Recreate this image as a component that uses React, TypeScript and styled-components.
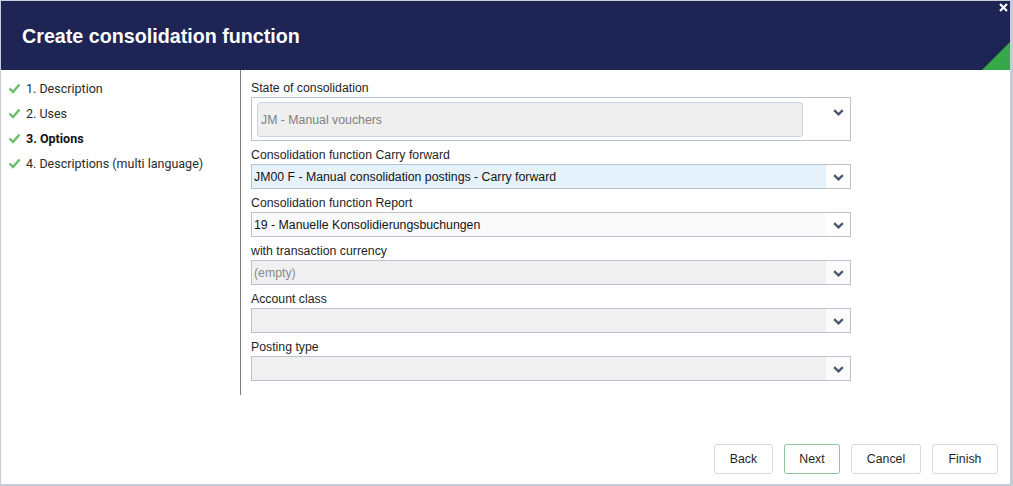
import React from 'react';
import styled, {createGlobalStyle} from 'styled-components';

const GlobalStyle = createGlobalStyle`
    html, body {
        margin: 0;
        padding: 0;
        background: #ffffff;
    }

    * {
        box-sizing: border-box;
    }
`;

interface Step {
    label: string;
    current?: boolean;
}

const steps: Step[] = [
    {label: '1. Description'},
    {label: '2. Uses'},
    {label: '3. Options', current: true},
    {label: '4. Descriptions (multi language)'},
];

type FieldTone = 'focus' | 'plain' | 'disabled';

interface Field {
    label: string;
    value?: string;
    tone: FieldTone;
    muted?: boolean;
}

const fields: Field[] = [
    {label: 'Consolidation function Carry forward', value: 'JM00 F - Manual consolidation postings - Carry forward', tone: 'focus'},
    {label: 'Consolidation function Report', value: '19 - Manuelle Konsolidierungsbuchungen', tone: 'plain'},
    {label: 'with transaction currency', value: '(empty)', tone: 'disabled', muted: true},
    {label: 'Account class', tone: 'disabled'},
    {label: 'Posting type', tone: 'disabled'},
];

const toneBg: Record<FieldTone, string> = {
    focus: '#e6f2fb',
    plain: '#fafafa',
    disabled: '#f0f0f0',
};

const buttons = [
    {label: 'Back', width: 59},
    {label: 'Next', width: 56, primary: true},
    {label: 'Cancel', width: 70},
    {label: 'Finish', width: 66},
];

const CheckIcon = () => (
    <svg
        width='13'
        height='11'
        viewBox='0 0 13 11'
    >
        <path
            d='M1.5 5.5 L5 9 L11.5 1.5'
            fill='none'
            stroke='#6cbd6a'
            strokeWidth='2.4'
        />
    </svg>
);

const ChevronIcon = () => (
    <svg
        width='11'
        height='7'
        viewBox='0 0 11 7'
    >
        <path
            d='M1.2 1.2 L5.5 5.3 L9.8 1.2'
            fill='none'
            stroke='#4b5568'
            strokeWidth='2.3'
        />
    </svg>
);

const CloseIcon = () => (
    <svg
        width='9'
        height='9'
        viewBox='0 0 9 9'
    >
        <path
            d='M1 1 L8 8 M8 1 L1 8'
            fill='none'
            stroke='#ffffff'
            strokeWidth='2.2'
        />
    </svg>
);

const App = () => {
    return (
        <>
            <GlobalStyle/>
            <Window>
                <Header>
                    <Title>{'Create consolidation function'}</Title>
                    <CloseButton>
                        <CloseIcon/>
                    </CloseButton>
                    <Corner/>
                </Header>
                <Body>
                    <Sidebar>
                        {steps.map((step) => (
                            <StepRow
                                key={step.label}
                                $current={step.current}
                            >
                                <CheckIcon/>
                                <span>{step.label}</span>
                            </StepRow>
                        ))}
                    </Sidebar>
                    <Form>
                        <FieldLabel>{'State of consolidation'}</FieldLabel>
                        <StateBox>
                            <StateInput>{'JM - Manual vouchers'}</StateInput>
                            <StateArrow>
                                <ChevronIcon/>
                            </StateArrow>
                        </StateBox>
                        {fields.map((field) => (
                            <React.Fragment key={field.label}>
                                <FieldLabel>{field.label}</FieldLabel>
                                <SelectBox>
                                    <SelectValue
                                        $bg={toneBg[field.tone]}
                                        $muted={field.muted}
                                    >
                                        {field.value}
                                    </SelectValue>
                                    <SelectArrow $disabled={field.tone === 'disabled'}>
                                        <ChevronIcon/>
                                    </SelectArrow>
                                </SelectBox>
                            </React.Fragment>
                        ))}
                    </Form>
                </Body>
                <Footer>
                    {buttons.map((b) => (
                        <Button
                            key={b.label}
                            $primary={b.primary}
                            $width={b.width}
                        >
                            {b.label}
                        </Button>
                    ))}
                </Footer>
            </Window>
        </>
    );
};

const Window = styled.div`
    width: 1013px;
    height: 486px;
    display: flex;
    flex-direction: column;
    border: 1px solid #c6cdd8;
    border-right: 3px solid #c6cdd8;
    border-bottom: 2px solid #c6cdd8;
    background: #ffffff;
    font-family: "Liberation Sans", Arial, sans-serif;
    color: #1f1f1f;
`;

const Header = styled.div`
    position: relative;
    height: 69px;
    flex: none;
    display: flex;
    align-items: center;
    padding-left: 21px;
    background: #1e2454;
    overflow: hidden;
`;

const Title = styled.h1`
    margin: 0;
    padding-top: 1px;
    font-size: 19.7px;
    font-weight: 700;
    color: #ffffff;
`;

const CloseButton = styled.span`
    position: absolute;
    top: 2px;
    right: 2px;
    display: flex;
`;

const Corner = styled.div`
    position: absolute;
    right: 0;
    bottom: 0;
    width: 28px;
    height: 28px;
    background: #35a94a;
    clip-path: polygon(100% 0, 100% 100%, 0 100%);
`;

const Body = styled.div`
    display: flex;
    align-items: stretch;
`;

const Sidebar = styled.div`
    width: 240px;
    flex: none;
    padding-top: 6px;
    border-right: 1px solid #808080;
`;

const StepRow = styled.div<{$current?: boolean}>`
    height: 25px;
    display: flex;
    align-items: center;
    gap: 5px;
    padding-left: 7px;
    font-family: Roboto, "Liberation Sans", sans-serif;
    font-size: 12.5px;
    font-weight: ${(p) => (p.$current ? 700 : 400)};
    color: ${(p) => (p.$current ? '#111111' : '#2a2a2a')};
`;

const Form = styled.div`
    width: 600px;
    margin-left: 10px;
    padding: 4px 0 14px;
`;

const FieldLabel = styled.div`
    height: 23px;
    padding-top: 6px;
    font-size: 12.3px;
    line-height: 16px;
    color: #1f1f1f;
`;

const StateBox = styled.div`
    height: 44px;
    display: flex;
    padding: 4px 0 4px 5px;
    border: 1px solid #b9c3d1;
    background: #ffffff;
`;

const StateInput = styled.div`
    width: 546px;
    height: 35px;
    display: flex;
    align-items: center;
    padding-left: 3px;
    border: 1px solid #ccd5e2;
    border-radius: 3px;
    background: #efefef;
    font-size: 12.3px;
    color: #808080;
`;

const StateArrow = styled.div`
    flex: 1;
    display: flex;
    justify-content: center;
    padding-top: 7px;
    padding-left: 24px;
`;

const SelectBox = styled.div`
    height: 25px;
    display: flex;
    border: 1px solid #b9c3d1;
`;

const SelectValue = styled.div<{$bg: string; $muted?: boolean}>`
    flex: 1;
    display: flex;
    align-items: center;
    padding-left: 2px;
    background: ${(p) => p.$bg};
    font-size: 12.3px;
    color: ${(p) => (p.$muted ? '#8a8a8a' : '#141414')};
`;

const SelectArrow = styled.div<{$disabled?: boolean}>`
    width: 24px;
    display: flex;
    align-items: center;
    justify-content: center;
    padding-top: 2px;
    background: ${(p) => (p.$disabled ? '#fbfbfb' : '#ffffff')};
`;

const Footer = styled.div`
    margin-top: auto;
    display: flex;
    justify-content: flex-end;
    gap: 11px;
    padding: 0 12px 10px 0;
`;

const Button = styled.button<{$primary?: boolean; $width: number}>`
    width: ${(p) => p.$width}px;
    height: 30px;
    padding: 0;
    border: 1px solid ${(p) => (p.$primary ? '#8ec39b' : '#d3dae5')};
    border-radius: 3px;
    background: #ffffff;
    font-family: "Liberation Sans", Arial, sans-serif;
    font-size: 12.3px;
    color: #1f1f1f;
`;

export default App;
